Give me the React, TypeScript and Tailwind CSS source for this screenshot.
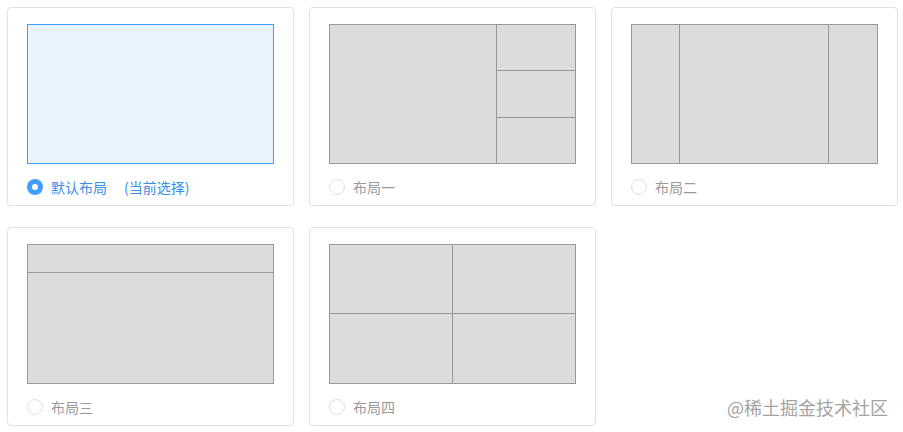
import React from "react";

type LayoutKey = "default" | "one" | "two" | "three" | "four";

const layouts: { key: LayoutKey; label: string }[] = [
  { key: "default", label: "默认布局" },
  { key: "one", label: "布局一" },
  { key: "two", label: "布局二" },
  { key: "three", label: "布局三" },
  { key: "four", label: "布局四" },
];

const cell = "bg-[#dcdcdc]";
const line = "border-[#999]";

const Preview = ({ type, active }: { type: LayoutKey; active: boolean }) => {
  if (active) {
    return <div className="h-[140px] w-full border border-[#409eff] bg-[#e8f3fe]" />;
  }
  if (type === "one") {
    return (
      <div className={`flex h-[140px] w-full border ${line} ${cell}`}>
        <div className={`flex-1 border-r ${line}`} />
        <div className="flex w-[78px] flex-col">
          <div className={`flex-1 border-b ${line}`} />
          <div className={`flex-1 border-b ${line}`} />
          <div className="flex-1" />
        </div>
      </div>
    );
  }
  if (type === "two") {
    return (
      <div className={`flex h-[140px] w-full border ${line} ${cell}`}>
        <div className={`w-[48px] border-r ${line}`} />
        <div className={`flex-1 border-r ${line}`} />
        <div className="w-[48px]" />
      </div>
    );
  }
  if (type === "three") {
    return (
      <div className={`flex h-[140px] w-full flex-col border ${line} ${cell}`}>
        <div className={`h-[28px] border-b ${line}`} />
        <div className="flex-1" />
      </div>
    );
  }
  return (
    <div className={`grid h-[140px] w-full grid-cols-2 grid-rows-2 border ${line} ${cell}`}>
      <div className={`border-r border-b ${line}`} />
      <div className={`border-b ${line}`} />
      <div className={`border-r ${line}`} />
      <div />
    </div>
  );
};

const LayoutCard = ({ type, label, active }: { type: LayoutKey; label: string; active: boolean }) => {
  return (
    <div className="w-[287px] rounded-[4px] border border-[#e2e2e2] bg-white px-[19px] pt-[16px] pb-[10px]">
      <Preview type={type} active={active} />
      <div className="mt-[15px] flex h-4 items-center text-[14px] leading-4">
        {active ? (
          <span className="flex h-4 w-4 items-center justify-center rounded-full bg-[#409eff]">
            <span className="h-[6px] w-[6px] rounded-full bg-white" />
          </span>
        ) : (
          <span className="h-4 w-4 rounded-full border border-[#dcdfe6] bg-white" />
        )}
        <span className={`ml-2 ${active ? "text-[#3a8ee6]" : "text-[#999]"}`}>{label}</span>
        {active && <span className="ml-[17px] text-[#3a8ee6]">(当前选择)</span>}
      </div>
    </div>
  );
};

export default function App() {
  return (
    <div
      className="relative h-[432px] w-[903px] overflow-hidden bg-white"
      style={{ fontFamily: '"Noto Sans CJK SC", "Noto Sans", sans-serif' }}
    >
      <div className="grid grid-cols-[287px_287px_287px] gap-x-[15px] gap-y-[21px] pl-[7px] pt-[7px]">
        {layouts.map((l) => (
          <LayoutCard key={l.key} type={l.key} label={l.label} active={l.key === "default"} />
        ))}
      </div>
      <div className="absolute right-[15px] bottom-[15px] text-[18px] leading-5 text-[#a3a3a3] [text-shadow:0_0_1px_#fff]">
        @稀土掘金技术社区
      </div>
    </div>
  );
}
